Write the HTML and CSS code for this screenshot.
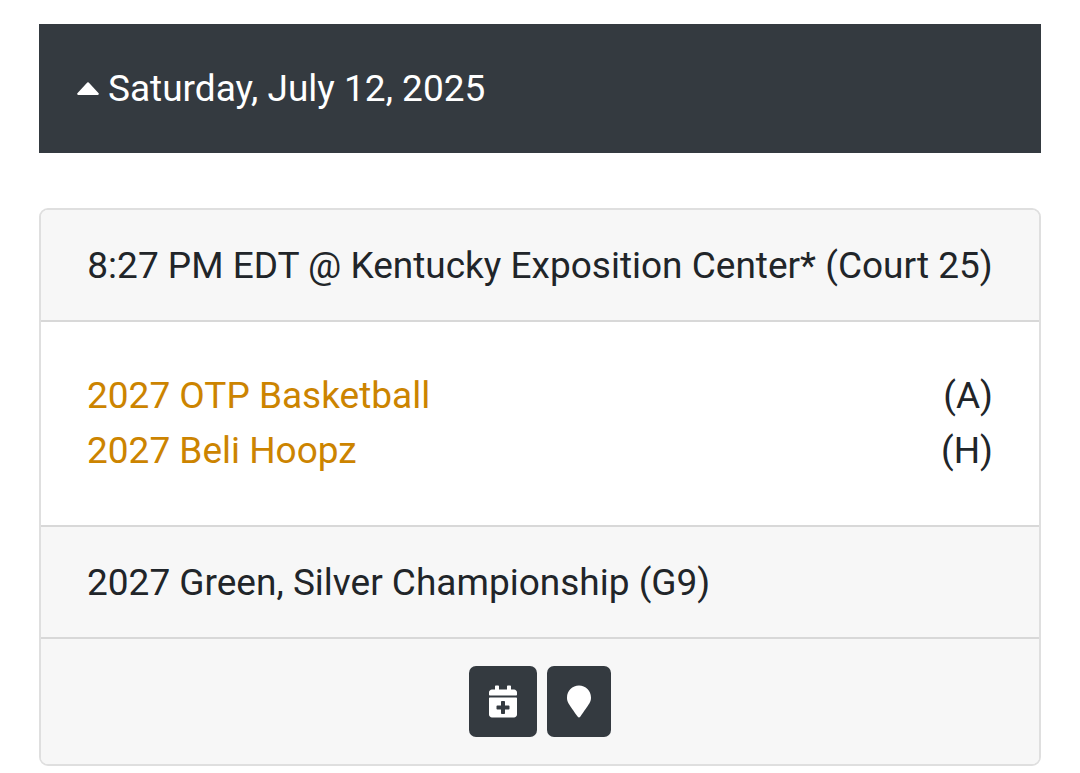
FILE: index.html
```html
<!DOCTYPE html>
<html lang="en">
<head>
<meta charset="utf-8">
<meta name="viewport" content="width=device-width, initial-scale=1">
<title>Game Schedule</title>
<link rel="stylesheet" href="styles.css">
</head>
<body>
<main class="schedule">
  <button class="day" type="button" aria-expanded="true">
    <svg class="caret" viewBox="0 0 22 13" aria-hidden="true"><path d="M1.200 13Q-.6 12.600 .6 11L9.600 1.200Q11-.6 12.400 1.200L21.400 11Q22.600 12.600 20.800 13Z"/></svg>
    <span>Saturday, July 12, 2025</span>
  </button>
  <article class="card">
    <header class="bar venue">8:27 PM EDT @ Kentucky Exposition Center* (Court 25)</header>
    <div class="teams">
      <div class="team"><a href="#otp">2027 OTP Basketball</a><span>(A)</span></div>
      <div class="team"><a href="#beli">2027 Beli Hoopz</a><span>(H)</span></div>
    </div>
    <div class="bar division">2027 Green, Silver Championship (G9)</div>
    <footer class="actions">
      <button class="action" type="button" aria-label="Add to calendar"><svg class="calendar" viewBox="0 0 448 512" aria-hidden="true"><path d="M436 160H12c-6.600 0-12-5.400-12-12v-36c0-26.500 21.500-48 48-48h48V12c0-6.600 5.400-12 12-12h40c6.600 0 12 5.400 12 12v52h128V12c0-6.600 5.400-12 12-12h40c6.600 0 12 5.400 12 12v52h48c26.500 0 48 21.500 48 48v36c0 6.600-5.400 12-12 12zM12 192h424c6.600 0 12 5.400 12 12v260c0 26.500-21.500 48-48 48H48c-26.500 0-48-21.500-48-48V204c0-6.600 5.400-12 12-12zm316 140c0-6.600-5.400-12-12-12h-60v-60c0-6.600-5.400-12-12-12h-40c-6.600 0-12 5.400-12 12v60h-60c-6.600 0-12 5.400-12 12v40c0 6.600 5.400 12 12 12h60v60c0 6.600 5.400 12 12 12h40c6.600 0 12-5.400 12-12v-60h60c6.600 0 12-5.400 12-12v-40z"/></svg></button>
      <button class="action" type="button" aria-label="Show map"><svg class="marker" viewBox="0 0 384 512" aria-hidden="true"><path d="M172.268 501.670C26.970 291.031 0 269.413 0 192 0 85.961 85.961 0 192 0s192 85.961 192 192c0 77.413-26.970 99.031-172.268 309.670-9.535 13.774-29.930 13.773-39.464 0z"/></svg></button>
    </footer>
  </article>
</main>
</body>
</html>
```
FILE: styles.css
```css
* { box-sizing: border-box; }
body {
  margin: 0;
  background: #fff;
  color: #212529;
  font: 37px/55px Roboto, "Liberation Sans", sans-serif;
}
.schedule { padding: 24px 39px 7px; }
button { border: 0; font: inherit; cursor: pointer; }
.day {
  display: flex;
  align-items: center;
  gap: 9px;
  width: 100%;
  padding: 37px 38px;
  background: #343a40;
  color: #fff;
  text-align: left;
}
.caret { width: 22px; height: 13px; fill: currentColor; }
.card {
  margin-top: 55px;
  border: 2px solid #dfdfdf;
  border-radius: 9px;
  background: #fff;
  overflow: hidden;
}
.bar { padding: 28px 46px 27px; background: #f7f7f7; }
.venue { border-bottom: 2px solid #d8d8d8; text-align: center; }
.teams { padding: 46px 46px 47px; }
.team { display: flex; justify-content: space-between; }
.team a { color: #cc8400; text-decoration: none; }
.division { border-top: 2px solid #d8d8d8; }
.actions {
  display: flex;
  justify-content: center;
  gap: 10px;
  padding: 27px;
  border-top: 2px solid #d8d8d8;
  background: #f7f7f7;
}
.action {
  display: flex;
  align-items: center;
  padding: 19px 20px;
  border-radius: 7px;
  background: #343a40;
  color: #fff;
}
.action svg { display: block; height: 33px; fill: currentColor; }
.calendar { width: 28px; }
.marker { width: 24px; }
```
